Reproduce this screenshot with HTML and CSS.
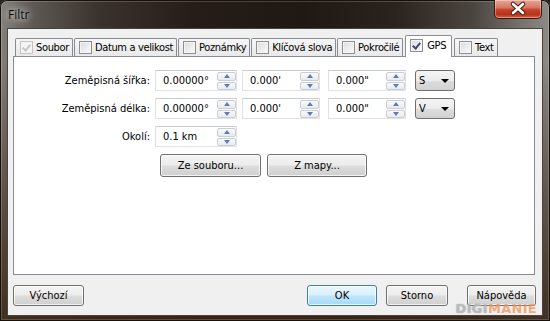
FILE: index.html
```html
<!DOCTYPE html>
<html lang="cs">
<head>
<meta charset="utf-8">
<title>Filtr</title>
<link rel="stylesheet" href="styles.css">
</head>
<body>
<div class="window">
  <div class="titlebar">
    <span class="title">Filtr</span>
    <div class="close">
      <svg width="48" height="19" viewBox="0 0 48 19">
        <path d="M19 5 L29 14 M29 5 L19 14" stroke="#4a1a10" stroke-width="4.6" stroke-linecap="round"/>
        <path d="M19 5 L29 14 M29 5 L19 14" stroke="#ffffff" stroke-width="2.6" stroke-linecap="round"/>
      </svg>
    </div>
  </div>
  <div class="client">
    <div class="tabcontrol">
      <div class="tabs">
        <div class="tab"><span class="cb checked disabled"></span>Soubor</div>
        <div class="tab"><span class="cb"></span>Datum a velikost</div>
        <div class="tab"><span class="cb"></span>Poznámky</div>
        <div class="tab"><span class="cb"></span>Klíčová slova</div>
        <div class="tab"><span class="cb"></span>Pokročilé</div>
        <div class="tab active"><span class="cb checked"></span>GPS</div>
        <div class="tab"><span class="cb"></span>Text</div>
      </div>
      <div class="panel">
        <div class="form">
          <span class="label">Zeměpisná šířka:</span>
          <div class="fields">
            <div class="spin deg"><span class="val">0.00000°</span><span class="arrows"><span class="up"></span><span class="down"></span></span></div>
            <div class="spin min"><span class="val">0.000'</span><span class="arrows"><span class="up"></span><span class="down"></span></span></div>
            <div class="spin sec"><span class="val">0.000"</span><span class="arrows"><span class="up"></span><span class="down"></span></span></div>
            <div class="combo"><span class="val">S</span><span class="drop"></span></div>
          </div>
          <span class="label">Zeměpisná délka:</span>
          <div class="fields">
            <div class="spin deg"><span class="val">0.00000°</span><span class="arrows"><span class="up"></span><span class="down"></span></span></div>
            <div class="spin min"><span class="val">0.000'</span><span class="arrows"><span class="up"></span><span class="down"></span></span></div>
            <div class="spin sec"><span class="val">0.000"</span><span class="arrows"><span class="up"></span><span class="down"></span></span></div>
            <div class="combo"><span class="val">V</span><span class="drop"></span></div>
          </div>
          <span class="label">Okolí:</span>
          <div class="fields">
            <div class="spin deg"><span class="val">0.1 km</span><span class="arrows"><span class="up"></span><span class="down"></span></span></div>
          </div>
          <span></span>
          <div class="actions">
            <button class="btn from-file">Ze souboru...</button>
            <button class="btn from-map">Z mapy...</button>
          </div>
        </div>
      </div>
    </div>
    <div class="footer">
      <button class="btn reset">Výchozí</button>
      <span class="spacer"></span>
      <button class="btn ok">OK</button>
      <button class="btn cancel">Storno</button>
      <button class="btn help">Nápověda</button>
    </div>
  </div>
  <span class="watermark"><span class="digi">DIGI</span><span class="manie">MANIE</span></span>
</div>
</body>
</html>
```
FILE: styles.css
```css
* { box-sizing: border-box; }
html, body { margin: 0; padding: 0; }
body {
  width: 550px;
  height: 321px;
  overflow: hidden;
  background: #2a221d;
  font-family: "DejaVu Sans Condensed", "DejaVu Sans", sans-serif;
  font-size: 11px;
  color: #000;
}
.window {
  position: relative;
  width: 550px;
  height: 321px;
  display: flex;
  flex-direction: column;
  padding: 0 7px 5px;
  border-radius: 7px 7px 0 0;
  box-shadow: inset 0 0 0 1px #17110d, inset 0 0 0 2px rgba(255,255,255,0.18);
  background:
    linear-gradient(180deg, rgba(0,0,0,0) 0, rgba(0,0,0,0) 60px, rgba(62,40,24,0.55) 200px, rgba(58,38,22,0.9) 321px),
    linear-gradient(90deg, #85817d 0%, #5e5954 6%, #3a322c 18%, #261d18 35%, #1f1813 55%, #2b231e 72%, #4b4540 86%, #7c7874 96%, #8e8b88 100%);
}
.titlebar {
  height: 28px;
  display: flex;
  justify-content: space-between;
  align-items: flex-start;
}
.title {
  padding: 6px 0 0 1px;
  font-family: "Open Sans", "Noto Sans", sans-serif;
  font-size: 12px;
  color: #0d0d0d;
  text-shadow: 0 0 6px rgba(255,255,255,0.85), 0 0 10px rgba(255,255,255,0.6);
}
.close {
  width: 48px;
  height: 19px;
  margin-right: 1px;
  border: 1px solid #3f1509;
  border-top: none;
  border-radius: 0 0 5px 5px;
  background: linear-gradient(180deg, #e7a597 0%, #d87c66 40%, #c5412a 55%, #b8321b 80%, #d2634a 100%);
  box-shadow: inset 0 0 0 1px rgba(255,255,255,0.35);
}
.close svg { display: block; margin: -1px 0 0 -1px; }
.client {
  flex: 1;
  display: flex;
  flex-direction: column;
  background: #f0f0f0;
  border: 1px solid #4a433e;
}
.tabcontrol {
  margin: 0 7px 0 5px;
  display: flex;
  flex-direction: column;
}
.tabs {
  height: 27px;
  display: flex;
  align-items: flex-end;
  padding-left: 2px;
  position: relative;
  z-index: 1;
}
.tab {
  height: 18px;
  margin-right: 1px;
  display: flex;
  align-items: center;
  gap: 3px;
  padding: 0 3px 0 4px;
  border: 1px solid #898c95;
  border-bottom: none;
  border-radius: 2px 2px 0 0;
  background: linear-gradient(180deg, #f6f6f6, #e9e9e9);
  white-space: nowrap;
  letter-spacing: -0.35px;
}
.tab.active {
  height: 22px;
  margin: 0 2px -1px 1px;
  background: #fff;
  padding-bottom: 3px;
  padding-right: 5px;
  gap: 4px;
}
.cb {
  position: relative;
  width: 13px;
  height: 13px;
  flex: none;
  border: 1px solid #8e8f8f;
  background: linear-gradient(135deg, #dcdcdc, #fbfbfb);
  box-shadow: inset 0 0 0 1px #f4f4f4;
}
.cb.disabled { border-color: #c4c4c4; background: #f4f4f4; }
.cb.checked::after {
  content: "";
  position: absolute;
  left: 3px;
  top: 1px;
  width: 3px;
  height: 6px;
  border-right: 2px solid #3c4a6e;
  border-bottom: 2px solid #3c4a6e;
  transform: rotate(40deg);
}
.cb.disabled.checked::after { border-color: #c6c6c6; }
.panel {
  height: 219px;
  background: #fff;
  border: 1px solid #898c95;
  padding-top: 13px;
}
.form {
  display: grid;
  grid-template-columns: 136px max-content;
  column-gap: 5px;
  row-gap: 7px;
  align-items: center;
}
.label { justify-self: end; }
.fields { display: flex; gap: 5px; }
.spin {
  height: 21px;
  display: flex;
  background: #fff;
  border: 1px solid #dfe2e6;
  border-top-color: #c9ccd1;
}
.spin.deg { width: 82px; }
.spin.min { width: 78px; }
.spin.sec { width: 78px; margin-left: 3px; }
.spin .val { flex: 1; padding-left: 7px; line-height: 19px; }
.arrows {
  width: 19px;
  display: flex;
  flex-direction: column;
  gap: 1px;
  padding: 1px 0 0;
}
.up, .down {
  flex: 1;
  display: flex;
  align-items: center;
  justify-content: center;
  border: 1px solid #c9cdd4;
  border-radius: 2px;
  background: linear-gradient(180deg, #fafafa, #e8eaec);
}
.up::after, .down::after {
  content: "";
  width: 0;
  height: 0;
  border-left: 3.5px solid transparent;
  border-right: 3.5px solid transparent;
}
.up::after { border-bottom: 4px solid #5d7cb6; }
.down::after { border-top: 4px solid #5d7cb6; }
.combo {
  width: 40px;
  height: 21px;
  margin-left: 4px;
  display: flex;
  align-items: center;
  justify-content: space-between;
  padding: 0 5px 0 3px;
  border: 1px solid #707070;
  border-radius: 3px;
  background: linear-gradient(180deg, #f4f4f4 0%, #ececec 50%, #dedede 50%, #d1d1d1 100%);
}
.drop {
  width: 0;
  height: 0;
  border-left: 4px solid transparent;
  border-right: 4px solid transparent;
  border-top: 4px solid #000;
}
.actions {
  display: flex;
  gap: 6px;
  padding-left: 5px;
}
.btn {
  height: 23px;
  padding: 0;
  font: inherit;
  color: #000;
  border: 1px solid #707070;
  border-radius: 3px;
  background: linear-gradient(180deg, #f4f4f4 0%, #ececec 48%, #dddddd 52%, #cfcfcf 100%);
  box-shadow: inset 0 0 0 1px rgba(255,255,255,0.75);
}
.from-file { width: 101px; }
.from-map { width: 100px; }
.footer {
  display: flex;
  margin: 10px 6px 0 5px;
}
.footer .btn { height: 21px; }
.spacer { flex: 1; }
.reset { width: 71px; }
.ok {
  width: 70px;
  border-color: #3c7fb1;
  background: linear-gradient(180deg, #eaf6fd 0%, #d9f0fc 48%, #bee6fd 52%, #a7d9f5 100%);
}
.cancel { width: 62px; margin-left: 9px; }
.help { width: 69px; margin-left: 19px; }
.watermark {
  position: absolute;
  right: 13px;
  bottom: 6px;
  font-family: "DejaVu Sans", sans-serif;
  font-weight: bold;
  font-size: 13px;
  letter-spacing: 0.3px;
  line-height: 12px;
}
.digi {
  color: rgba(235,235,235,0.55);
  text-shadow: 0 0 1px rgba(110,110,110,0.9);
}
.manie { color: rgba(240,150,95,0.8); }
```
